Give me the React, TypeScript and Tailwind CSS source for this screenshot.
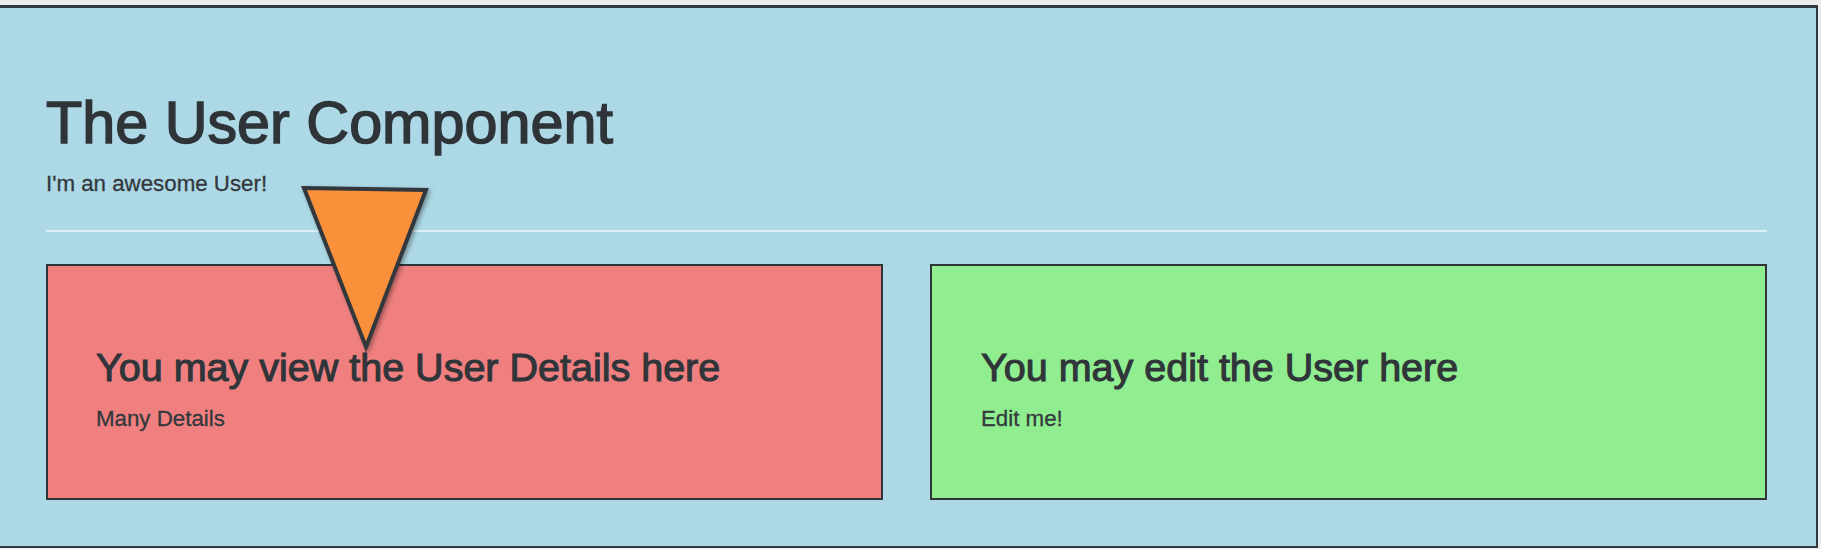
import React from 'react';

const font = { fontFamily: '"Liberation Sans", Arial, Helvetica, sans-serif' };

function Panel({
  tone,
  title,
  text,
}: {
  tone: 'view' | 'edit';
  title: string;
  text: string;
}) {
  return (
    <div
      className={
        tone === 'view'
          ? 'h-[236px] border-2 border-[#2f3438] bg-[#f08080] pl-[48px] pt-[80px]'
          : 'h-[236px] border-2 border-[#2f3438] bg-[#90ee90] pl-[49px] pt-[80px]'
      }
    >
      <h3 className="text-[39.5px] leading-[43px] text-[#30353a] [-webkit-text-stroke:1.1px_#30353a]">
        {title}
      </h3>
      <p className="mt-[14px] text-[22.3px] leading-[31px] text-[#33383c] [-webkit-text-stroke:0.3px_#33383c]">
        {text}
      </p>
    </div>
  );
}

export default function App() {
  return (
    <div className="relative h-[549px] w-[1821px] overflow-hidden bg-[#eeedee] pt-[5px]" style={font}>
      <div className="h-[543px] w-[1818px] border-t-[3px] border-r-2 border-b-2 border-[#2f3a44] bg-[#add8e6] pl-[46px] pr-[49px] pt-[82px]">
        <h1 className="text-[59.3px] leading-[65px] text-[#2f3439] [-webkit-text-stroke:1.5px_#2f3439]">
          The User Component
        </h1>
        <p className="mt-[13px] text-[22.3px] leading-[31px] text-[#33383c] [-webkit-text-stroke:0.3px_#33383c]">
          I'm an awesome User!
        </p>
        <div className="mt-[31px] h-[2px] bg-[#dceff6]" />
        <div className="mt-[32px] grid grid-cols-2 gap-[47px]">
          <Panel tone="view" title="You may view the User Details here" text="Many Details" />
          <Panel tone="edit" title="You may edit the User here" text="Edit me!" />
        </div>
      </div>

      {/* annotation arrow laid over the page */}
      <svg
        className="absolute left-[296px] top-[180px] [filter:drop-shadow(2px_2px_2px_rgba(0,0,0,0.35))]"
        width="140"
        height="176"
        viewBox="0 0 140 176"
      >
        <polygon
          points="8,8 130,10 70,167"
          fill="#fb903b"
          stroke="#33383c"
          strokeWidth="4"
          strokeLinejoin="miter"
        />
      </svg>
    </div>
  );
}
